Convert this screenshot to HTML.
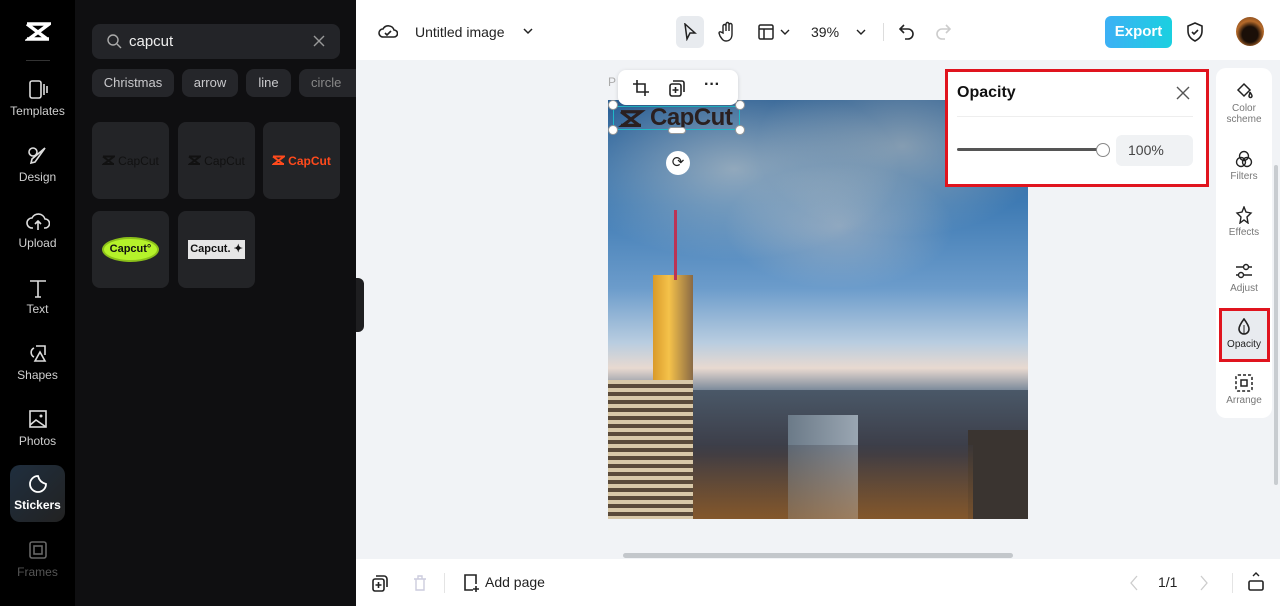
<!DOCTYPE html>
<html><head><meta charset="utf-8"><style>
*{margin:0;padding:0;box-sizing:border-box}
body{width:1280px;height:606px;overflow:hidden;position:relative;font-family:"Liberation Sans",sans-serif;background:#f1f3f6}
.abs{position:absolute}
#rail{left:0;top:0;width:75px;height:606px;background:#000}
#panel{left:75px;top:0;width:281px;height:606px;background:#0f0f11}
.ri{position:absolute;left:0;width:75px;text-align:center;color:#cfcfcf;font-size:12px}
.ri svg{display:block;margin:0 auto 4px}
.chip{position:absolute;top:69px;height:28px;background:#25262a;border-radius:8px;color:#c9c9cc;font-size:13px;line-height:28px;text-align:center}
.tile{position:absolute;width:77px;height:77px;background:#232427;border-radius:8px;display:flex;align-items:center;justify-content:center;font-size:12px;gap:3px}
.top{left:356px;top:0;width:924px;height:60px;background:#fff}
.bot{left:356px;top:559px;width:924px;height:47px;background:#fff}
.side{left:1216px;top:68px;width:56px;height:350px;background:#fff;border-radius:10px}
.si{position:absolute;left:0;width:56px;text-align:center;font-size:10px;color:#777;line-height:11px}
.si svg{display:block;margin:0 auto 3px}
</style></head><body>
<div id="rail" class="abs">
  <svg class="abs" style="left:25px;top:21px" width="26" height="22" viewBox="0 0 26 22"><path d="M2 3h22L4 18h20M2 3l20 15M2 18h22" fill="none" stroke="#fff" stroke-width="3.5"/></svg>
  <div class="abs" style="left:26px;top:60px;width:24px;height:1px;background:#333"></div>
  <div class="ri" style="top:80px"><svg width="22" height="20" viewBox="0 0 22 20"><rect x="3" y="1" width="11" height="17" rx="2" fill="none" stroke="#ddd" stroke-width="1.6"/><path d="M17 4v11M20 6v7" stroke="#ddd" stroke-width="1.6"/></svg>Templates</div>
  <div class="ri" style="top:146px"><svg width="22" height="20" viewBox="0 0 22 20"><circle cx="6" cy="6" r="4" fill="none" stroke="#ddd" stroke-width="1.6"/><path d="M18 2L8 16l-4 1 1-4z" fill="none" stroke="#ddd" stroke-width="1.6"/></svg>Design</div>
  <div class="ri" style="top:212px"><svg width="24" height="20" viewBox="0 0 24 20"><path d="M7 16H6a5 5 0 010-10 7 7 0 0113 1 4 4 0 010 9h-1M12 18V9m-3 3l3-3 3 3" fill="none" stroke="#ddd" stroke-width="1.6"/></svg>Upload</div>
  <div class="ri" style="top:278px"><svg width="22" height="20" viewBox="0 0 22 20"><path d="M3 3h16M11 3v16M8 19h6" stroke="#ddd" stroke-width="1.6"/></svg>Text</div>
  <div class="ri" style="top:344px"><svg width="22" height="20" viewBox="0 0 22 20"><path d="M7 4a5 5 0 000 9M9 2h9v9M13 8l5 9H8z" fill="none" stroke="#ddd" stroke-width="1.6"/></svg>Shapes</div>
  <div class="ri" style="top:410px"><svg width="22" height="20" viewBox="0 0 22 20"><rect x="3" y="1" width="16" height="16" fill="none" stroke="#ddd" stroke-width="1.6"/><path d="M3 15l6-5 10 7" fill="none" stroke="#ddd" stroke-width="1.6"/><circle cx="14" cy="6" r="1.5" fill="#ddd"/></svg>Photos</div>
  <div class="abs" style="left:10px;top:465px;width:55px;height:57px;border-radius:10px;background:linear-gradient(135deg,#1f2e3e,#222)"></div>
  <div class="ri" style="top:474px;color:#fff;font-weight:bold"><svg width="22" height="20" viewBox="0 0 22 20"><path d="M19 10a8 8 0 11-8-8c1 4 4 7 8 8z" fill="none" stroke="#fff" stroke-width="1.8"/></svg>Stickers</div>
  <div class="ri" style="top:541px;color:#555"><svg width="22" height="20" viewBox="0 0 22 20"><rect x="3" y="1" width="16" height="16" rx="2" fill="none" stroke="#666" stroke-width="1.6"/><rect x="7" y="5" width="8" height="8" fill="none" stroke="#666" stroke-width="1.6"/></svg>Frames</div>
</div>
<div id="panel" class="abs">
  <div class="abs" style="left:17px;top:24px;width:248px;height:35px;background:#232428;border-radius:8px"></div>
  <svg class="abs" style="left:31px;top:33px" width="16" height="16" viewBox="0 0 16 16"><circle cx="7" cy="7" r="5" fill="none" stroke="#aaa" stroke-width="1.4"/><path d="M11 11l4 4" stroke="#aaa" stroke-width="1.4"/></svg>
  <div class="abs" style="left:54px;top:33px;color:#eee;font-size:15px">capcut</div>
  <svg class="abs" style="left:238px;top:35px" width="12" height="12"><path d="M1 1l10 10M11 1L1 11" stroke="#999" stroke-width="1.4"/></svg>
  <div class="chip" style="left:17px;width:82px">Christmas</div>
  <div class="chip" style="left:107px;width:56px">arrow</div>
  <div class="chip" style="left:171px;width:45px">line</div>
  <div class="chip" style="left:224px;width:57px;text-align:left;padding-left:12px;border-radius:8px 0 0 8px;color:#888">circle</div>
  <div class="tile" style="left:17px;top:122px;color:#111"><svg width="13" height="11" viewBox="0 0 26 22"><path d="M2 3h22L4 18h20M2 3l20 15M2 18h22" fill="none" stroke="#111" stroke-width="4"/></svg>CapCut</div>
  <div class="tile" style="left:103px;top:122px;color:#111"><svg width="13" height="11" viewBox="0 0 26 22"><path d="M2 3h22L4 18h20M2 3l20 15M2 18h22" fill="none" stroke="#111" stroke-width="4"/></svg>CapCut</div>
  <div class="tile" style="left:188px;top:122px;color:#ff4a1c;font-weight:bold"><svg width="13" height="11" viewBox="0 0 26 22"><path d="M2 3h22L4 18h20M2 3l20 15M2 18h22" fill="none" stroke="#ff4a1c" stroke-width="4"/></svg>CapCut</div>
  <div class="tile" style="left:17px;top:211px"><div style="width:57px;height:25px;border-radius:50%;background:#b5f22a;border:2px solid #8bc01a;color:#111;font-size:11px;font-weight:bold;line-height:21px;text-align:center">Capcut°</div></div>
  <div class="tile" style="left:103px;top:211px"><div style="width:57px;height:19px;background:#e6e6e6;color:#111;font-size:11px;font-weight:bold;line-height:19px;text-align:center">Capcut. ✦</div></div>
  <div class="abs" style="left:281px;top:278px;width:8px;height:54px;background:#1e1e20;border-radius:0 6px 6px 0"></div>
</div>
<div class="abs top">
  <svg class="abs" style="left:22px;top:22px" width="20" height="18" viewBox="0 0 20 18"><path d="M5 15a4 4 0 010-8 6 6 0 0111 1 3.5 3.5 0 010 7z M7 11l2 2 4-4" fill="none" stroke="#222" stroke-width="1.6"/></svg>
  <div class="abs" style="left:59px;top:24px;font-size:14px;color:#222">Untitled image</div>
  <svg class="abs" style="left:167px;top:27px" width="10" height="8"><path d="M1 2l4 4 4-4" fill="none" stroke="#222" stroke-width="1.5"/></svg>
  <div class="abs" style="left:320px;top:16px;width:28px;height:32px;background:#e8ebef;border-radius:6px"></div>
  <svg class="abs" style="left:327px;top:23px" width="14" height="18"><path d="M2 1l10 9H7l-3 6z" fill="none" stroke="#222" stroke-width="1.5"/></svg>
  <svg class="abs" style="left:362px;top:21px" width="18" height="22"><path d="M5 12V5a1.5 1.5 0 013 0v5V3a1.5 1.5 0 013 0v7V4a1.5 1.5 0 013 0v9c0 4-2 7-6 7-3 0-4-2-6-5l-1-3a1.3 1.3 0 012-1z" fill="none" stroke="#222" stroke-width="1.4"/></svg>
  <svg class="abs" style="left:402px;top:24px" width="16" height="16"><rect x="1" y="1" width="14" height="14" rx="1.5" fill="none" stroke="#222" stroke-width="1.5"/><path d="M1 5h14M6 5v10" stroke="#222" stroke-width="1.5"/></svg>
  <svg class="abs" style="left:424px;top:28px" width="10" height="8"><path d="M1 2l4 4 4-4" fill="none" stroke="#222" stroke-width="1.4"/></svg>
  <div class="abs" style="left:455px;top:24px;font-size:14px;color:#222">39%</div>
  <svg class="abs" style="left:500px;top:28px" width="10" height="8"><path d="M1 2l4 4 4-4" fill="none" stroke="#222" stroke-width="1.4"/></svg>
  <div class="abs" style="left:527px;top:23px;width:1px;height:18px;background:#ddd"></div>
  <svg class="abs" style="left:543px;top:23px" width="16" height="18"><path d="M5 2L1 6l4 4M1 6h8a5 5 0 010 10H6" fill="none" stroke="#222" stroke-width="1.6"/></svg>
  <svg class="abs" style="left:579px;top:23px" width="16" height="18"><path d="M11 2l4 4-4 4M15 6H7a5 5 0 000 10h3" fill="none" stroke="#ccc" stroke-width="1.6"/></svg>
  <div class="abs" style="left:749px;top:16px;width:67px;height:32px;border-radius:6px;background:linear-gradient(90deg,#3db0f5,#1ad0e0);color:#fff;font-weight:bold;font-size:15px;line-height:32px;text-align:center">Export</div>
  <svg class="abs" style="left:830px;top:22px" width="18" height="20"><path d="M9 1l7 3v5c0 5-3 8-7 10-4-2-7-5-7-10V4z M6 10l2 2 4-4" fill="none" stroke="#222" stroke-width="1.6"/></svg>
  <div class="abs" style="left:880px;top:17px;width:28px;height:29px;border-radius:50%;background:radial-gradient(circle at 50% 60%,#1a0f08 35%,#b56a2a 60%,#6b3a18)"></div>
</div>
<!-- image -->
<div class="abs" style="left:608px;top:100px;width:420px;height:419px;overflow:hidden;background:linear-gradient(180deg,#2a5f95 0%,#3f7bb4 25%,#6c9ccb 45%,#b9cde0 58%,#e8d9d0 64%,#6d7f93 70%,#3a4552 80%,#2a2b33 100%)">
  <div class="abs" style="left:0;top:0;width:420px;height:230px;background:radial-gradient(ellipse at 30% 30%,rgba(255,235,210,.45),transparent 40%),radial-gradient(ellipse at 70% 20%,rgba(255,230,200,.4),transparent 35%),radial-gradient(ellipse at 55% 55%,rgba(255,225,200,.35),transparent 35%)"></div>
  <div class="abs" style="left:0;top:290px;width:420px;height:130px;background:linear-gradient(180deg,#4a5868,#3a3a44 50%,#5a4430)"></div>
  <div class="abs" style="left:45px;top:175px;width:40px;height:245px;background:linear-gradient(90deg,#d99a2a,#f5c24a 40%,#8a6a45)"></div>
  <div class="abs" style="left:0;top:280px;width:85px;height:140px;background:repeating-linear-gradient(180deg,#d8c8a8 0 4px,#5a4a3a 4px 8px)"></div>
  <div class="abs" style="left:66px;top:110px;width:3px;height:70px;background:#b35"></div>
  <div class="abs" style="left:180px;top:315px;width:70px;height:105px;background:linear-gradient(90deg,#6b7a88,#9aa6b2)"></div>
  <div class="abs" style="left:360px;top:330px;width:60px;height:90px;background:#3a3430"></div>
  <div class="abs" style="left:85px;top:345px;width:280px;height:75px;background:linear-gradient(180deg,rgba(60,60,70,.3),rgba(160,100,40,.6))"></div>
</div>
<!-- selection -->
<div class="abs" style="left:613px;top:106px;width:127px;height:24px;border:1.5px solid #20b8c8"></div>
<svg class="abs" style="left:616px;top:109px" width="30" height="20" viewBox="0 0 26 22"><path d="M2 3h22L4 18h20M2 3l20 15M2 18h22" fill="none" stroke="#2a2020" stroke-width="3.5"/></svg>
<div class="abs" style="left:650px;top:104px;font-size:24px;font-weight:bold;color:#2a2020;line-height:28px;letter-spacing:-0.5px">CapCut</div>
<div class="abs" style="left:608px;top:100px;width:10px;height:10px;border-radius:50%;background:#fff;border:1px solid #999"></div>
<div class="abs" style="left:735px;top:100px;width:10px;height:10px;border-radius:50%;background:#fff;border:1px solid #999"></div>
<div class="abs" style="left:608px;top:125px;width:10px;height:10px;border-radius:50%;background:#fff;border:1px solid #999"></div>
<div class="abs" style="left:735px;top:125px;width:10px;height:10px;border-radius:50%;background:#fff;border:1px solid #999"></div>
<div class="abs" style="left:668px;top:127px;width:18px;height:7px;border-radius:4px;background:#fff;border:1px solid #999"></div>
<div class="abs" style="left:666px;top:151px;width:24px;height:24px;border-radius:50%;background:#fff;text-align:center;font-size:15px;line-height:24px;color:#222">⟳</div>
<div class="abs" style="left:608px;top:75px;font-size:12px;color:#aaa">P</div>
<div class="abs" style="left:618px;top:70px;width:120px;height:35px;background:#fff;border-radius:8px;box-shadow:0 1px 4px rgba(0,0,0,.15)"></div>
<svg class="abs" style="left:632px;top:79px" width="18" height="18"><path d="M5 1v12h12M1 5h12v12" fill="none" stroke="#222" stroke-width="1.6"/></svg>
<svg class="abs" style="left:668px;top:79px" width="18" height="18"><rect x="2" y="5" width="11" height="12" rx="2" fill="none" stroke="#222" stroke-width="1.6"/><path d="M5 2h9a2 2 0 012 2v9M7.5 8v6M4.5 11h6" fill="none" stroke="#222" stroke-width="1.6"/></svg>
<div class="abs" style="left:704px;top:76px;font-size:16px;font-weight:bold;color:#222">···</div>
<!-- opacity panel -->
<div class="abs" style="left:945px;top:69px;width:264px;height:118px;background:#fff;border:3px solid #e0141e"></div>
<div class="abs" style="left:957px;top:84px;font-size:16px;font-weight:bold;color:#111">Opacity</div>
<svg class="abs" style="left:1176px;top:86px" width="14" height="14"><path d="M1 1l12 12M13 1L1 13" stroke="#555" stroke-width="1.4"/></svg>
<div class="abs" style="left:957px;top:116px;width:236px;height:1px;background:#eee"></div>
<div class="abs" style="left:957px;top:148px;width:146px;height:3px;background:#555;border-radius:2px"></div>
<div class="abs" style="left:1096px;top:143px;width:14px;height:14px;border-radius:50%;background:#fff;border:1px solid #888"></div>
<div class="abs" style="left:1116px;top:135px;width:77px;height:31px;background:#f0f2f4;border-radius:6px;font-size:14px;color:#444;line-height:31px;padding-left:12px">100%</div>
<!-- side tools -->
<div class="abs side">
  <div class="si" style="top:14px"><svg width="20" height="18"><path d="M4 8l6-6 6 6-6 6z M16 10c1 2 2 3 2 4a1.5 1.5 0 01-3 0c0-1 1-2 1-4" fill="none" stroke="#222" stroke-width="1.5"/></svg>Color<br>scheme</div>
  <div class="si" style="top:82px"><svg width="20" height="18"><circle cx="10" cy="6" r="4.5" fill="none" stroke="#222" stroke-width="1.4"/><circle cx="7" cy="12" r="4.5" fill="none" stroke="#222" stroke-width="1.4"/><circle cx="13" cy="12" r="4.5" fill="none" stroke="#222" stroke-width="1.4"/></svg>Filters</div>
  <div class="si" style="top:138px"><svg width="20" height="18"><path d="M10 1l2 5 5 1-4 4 1 6-4-3-4 3 1-6-4-4 5-1z" fill="none" stroke="#222" stroke-width="1.4"/></svg>Effects</div>
  <div class="si" style="top:194px"><svg width="20" height="18"><path d="M2 5h16M2 13h16" stroke="#222" stroke-width="1.4"/><circle cx="12" cy="5" r="2.5" fill="#fff" stroke="#222" stroke-width="1.4"/><circle cx="7" cy="13" r="2.5" fill="#fff" stroke="#222" stroke-width="1.4"/></svg>Adjust</div>
  <div class="abs" style="left:3px;top:240px;width:51px;height:54px;background:#e8ebef;border:3px solid #e0141e"></div>
  <div class="si" style="top:250px;color:#222"><svg width="20" height="18"><path d="M10 1c3 4 5 7 5 10a5 5 0 01-10 0c0-3 2-6 5-10z" fill="none" stroke="#222" stroke-width="1.6"/><path d="M10 7v9" stroke="#222"/></svg>Opacity</div>
  <div class="si" style="top:306px"><svg width="20" height="18"><rect x="2" y="1" width="16" height="16" rx="2" fill="none" stroke="#222" stroke-width="1.5" stroke-dasharray="3 2"/><rect x="7" y="6" width="6" height="6" fill="none" stroke="#222" stroke-width="1.5"/></svg>Arrange</div>
</div>
<div class="abs" style="left:1274px;top:165px;width:4px;height:320px;background:#c8ccd0;border-radius:2px"></div>
<div class="abs" style="left:623px;top:553px;width:390px;height:5px;background:#c3c7cb;border-radius:3px"></div>
<div class="abs bot">
  <svg class="abs" style="left:16px;top:16px" width="16" height="17"><rect x="1" y="4" width="11" height="12" rx="2" fill="none" stroke="#222" stroke-width="1.6"/><path d="M4 1h8a3 3 0 013 3v8M6.5 7v6M3.5 10h6" fill="none" stroke="#222" stroke-width="1.6"/></svg>
  <svg class="abs" style="left:56px;top:15px" width="16" height="18"><path d="M2 5h12M4 5v11h8V5M6 5V2h4v3" fill="none" stroke="#ccd" stroke-width="1.4"/></svg>
  <div class="abs" style="left:88px;top:14px;width:1px;height:20px;background:#e4e4e4"></div>
  <svg class="abs" style="left:106px;top:14px" width="18" height="20"><path d="M11 17H3V2h11v9M14 13v6M11 16h6" fill="none" stroke="#222" stroke-width="1.6"/></svg>
  <div class="abs" style="left:129px;top:15px;font-size:14px;color:#222">Add page</div>
  <svg class="abs" style="left:774px;top:16px" width="8" height="16"><path d="M7 1L1 8l6 7" fill="none" stroke="#ccc" stroke-width="1.3"/></svg>
  <div class="abs" style="left:802px;top:15px;font-size:14px;color:#222">1/1</div>
  <svg class="abs" style="left:844px;top:16px" width="8" height="16"><path d="M1 1l6 7-6 7" fill="none" stroke="#ccc" stroke-width="1.3"/></svg>
  <div class="abs" style="left:876px;top:14px;width:1px;height:20px;background:#e4e4e4"></div>
  <svg class="abs" style="left:892px;top:13px" width="16" height="20"><path d="M5 4l3-3 3 3" fill="none" stroke="#222" stroke-width="1.4"/><rect x="1" y="9" width="14" height="9" rx="1.5" fill="none" stroke="#222" stroke-width="1.6"/></svg>
</div>
</body></html>
